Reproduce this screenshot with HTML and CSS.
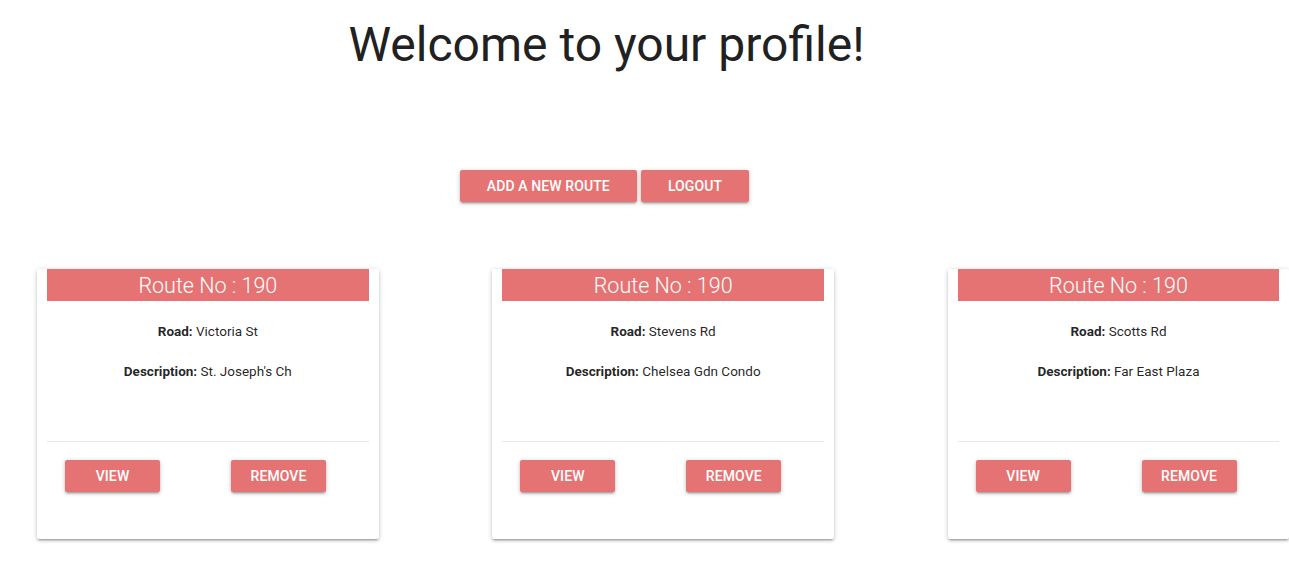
FILE: index.html
```html
<!DOCTYPE html>
<html lang="en">
<head>
<meta charset="utf-8">
<title>Profile</title>
<link rel="stylesheet" href="styles.css">
</head>
<body>
<div class="page">
  <header class="head">
    <h1 class="title">Welcome to your profile!</h1>
    <div class="actions">
      <button class="btn btn-wide">ADD A NEW ROUTE</button>
      <button class="btn btn-wide">LOGOUT</button>
    </div>
  </header>
  <main class="cards">
    <div class="card">
      <div class="card-title">Route No : 190</div>
      <div class="card-body">
        <p><b>Road:</b> Victoria St</p>
        <p><b>Description:</b> St. Joseph's Ch</p>
      </div>
      <div class="card-actions">
        <button class="btn btn-small">VIEW</button>
        <button class="btn btn-small">REMOVE</button>
      </div>
    </div>
    <div class="card">
      <div class="card-title">Route No : 190</div>
      <div class="card-body">
        <p><b>Road:</b> Stevens Rd</p>
        <p><b>Description:</b> Chelsea Gdn Condo</p>
      </div>
      <div class="card-actions">
        <button class="btn btn-small">VIEW</button>
        <button class="btn btn-small">REMOVE</button>
      </div>
    </div>
    <div class="card">
      <div class="card-title">Route No : 190</div>
      <div class="card-body">
        <p><b>Road:</b> Scotts Rd</p>
        <p><b>Description:</b> Far East Plaza</p>
      </div>
      <div class="card-actions">
        <button class="btn btn-small">VIEW</button>
        <button class="btn btn-small">REMOVE</button>
      </div>
    </div>
  </main>
</div>
</body>
</html>
```
FILE: styles.css
```css
html, body {
  margin: 0;
  padding: 0;
  background: #fff;
}
body {
  font-family: Roboto, "Liberation Sans", sans-serif;
  color: rgba(0, 0, 0, 0.87);
}
.page {
  width: 1289px;
  padding-bottom: 16px;
}
.head {
  width: 1213px;
  text-align: center;
}
.title {
  margin: 0;
  padding-top: 15px;
  font-size: 48px;
  font-weight: 400;
  line-height: 60px;
  color: #212121;
}
.actions {
  margin-top: 95px;
  padding-right: 4px;
  display: flex;
  justify-content: center;
  gap: 4px;
}
.btn {
  border: none;
  border-radius: 2px;
  background: #e57373;
  color: #fff;
  font-family: Roboto, "Liberation Sans", sans-serif;
  font-size: 14px;
  font-weight: 500;
  letter-spacing: 0.1px;
  height: 32px;
  line-height: 33px;
  padding: 0;
  text-transform: uppercase;
  box-shadow: 0 2px 2px 0 rgba(0,0,0,.14), 0 3px 1px -2px rgba(0,0,0,.12), 0 1px 5px 0 rgba(0,0,0,.2);
  cursor: pointer;
}
.btn-wide {
  padding: 0 27px;
}
.btn-small {
  width: 95px;
}
.cards {
  display: flex;
  gap: 113.66px;
  padding-left: 37px;
  margin-top: 67px;
}
.card {
  flex: 0 0 341.67px;
  width: 341.67px;
  height: 270px;
  box-sizing: border-box;
  padding: 0 10px;
  background: #fff;
  border-radius: 2px;
  box-shadow: 0 2px 2px 0 rgba(0,0,0,.14), 0 3px 1px -2px rgba(0,0,0,.12), 0 1px 5px 0 rgba(0,0,0,.2);
}
.card-title {
  background: #e57373;
  color: #fff;
  height: 32px;
  line-height: 33px;
  font-size: 21.5px;
  font-weight: 300;
  text-align: center;
}
.card-body {
  height: 141px;
  padding-top: 20px;
  box-sizing: border-box;
  border-bottom: 1px solid #e8e8e8;
  text-align: center;
  font-size: 13.5px;
}
.card-body p {
  margin: 0 0 19px;
  line-height: 21px;
}
.card-body b {
  font-weight: 700;
}
.card-actions {
  display: flex;
  gap: 71px;
  padding: 18px 0 0 18px;
}
```
